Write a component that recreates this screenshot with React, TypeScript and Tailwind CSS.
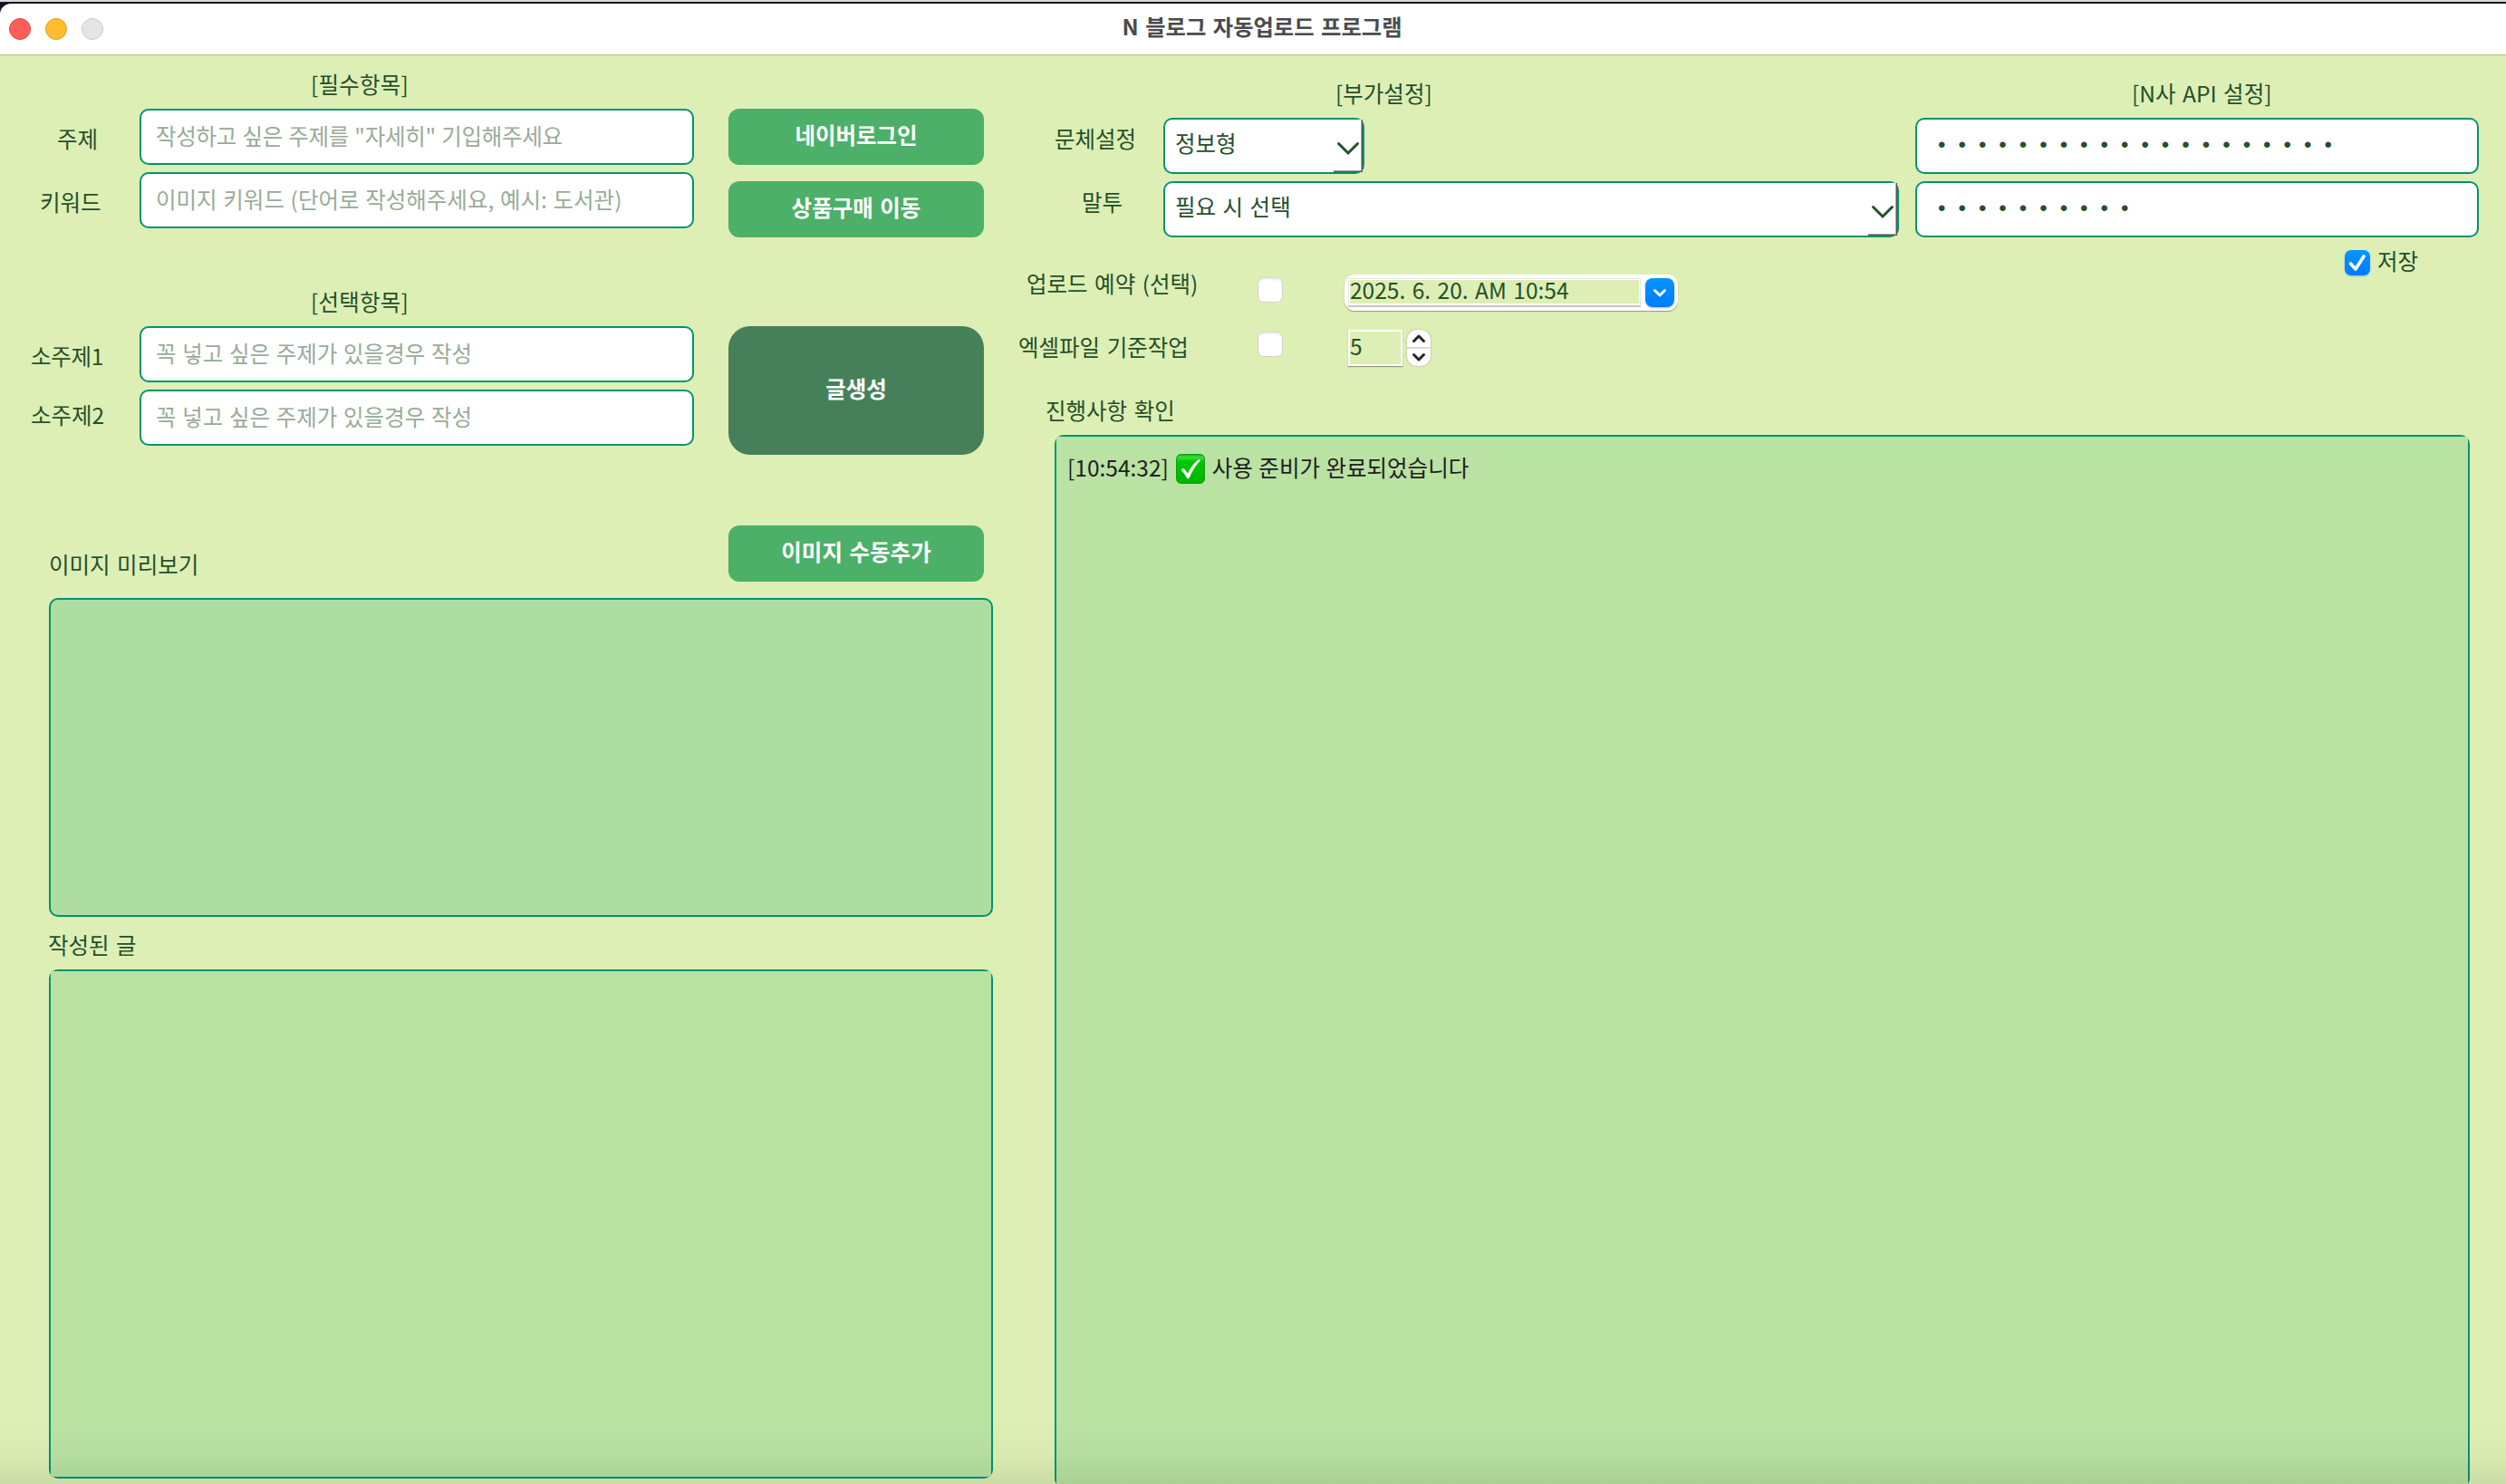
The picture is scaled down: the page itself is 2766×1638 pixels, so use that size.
import { useState } from "react";

const LABEL = "h-8 leading-8 whitespace-nowrap";
const FIELD =
  "h-[62px] w-full rounded-[10px] border-2 border-[#009370] bg-white text-[#264F2B] placeholder:text-[#98AC98] placeholder:opacity-100 outline-none";

function TextField({ placeholder, spacing = "[word-spacing:1.2px]" }: { placeholder: string; spacing?: string }) {
  return (
    <input
      className={`${FIELD} pb-[4px] pl-[16px] leading-8 ${spacing}`}
      placeholder={placeholder}
    />
  );
}

function SecretField({ value }: { value: string }) {
  return (
    <div
      className={`${FIELD} overflow-hidden pl-[23px] font-['Liberation_Sans'] text-[24px] leading-[56px] tracking-[14.04px] whitespace-nowrap`}
    >
      {value}
    </div>
  );
}

function SelectField({ value, width }: { value: string; width: string }) {
  return (
    <div
      className={`relative flex h-[62px] ${width} rounded-[10px] border-2 border-[#009370] bg-white pl-[11px]`}
    >
      <span className="mt-[10px] h-8 leading-8 whitespace-nowrap">{value}</span>
      {/* bevel of the drop button */}
      <span className="absolute top-0 right-0 h-[58px] w-8 border-r border-b border-[#565456] bg-white shadow-[inset_-1px_-1px_0_#a3a3a3]" />
      <svg
        className="absolute top-[24px] right-[3px]"
        width="26"
        height="16"
        viewBox="0 0 26 16"
        fill="none"
        stroke="#264F2B"
        strokeWidth="3"
        strokeLinecap="round"
      >
        <path d="M2.500 2.500L13 13L23.500 2.500" />
      </svg>
    </div>
  );
}

function GreenButton({ children }: { children: string }) {
  return (
    <button className="h-[62px] w-full rounded-[12px] bg-[#4CB068] pb-[5px] leading-8 font-bold text-white [word-spacing:2px]">
      {children}
    </button>
  );
}

function EmptyCheck({ className }: { className: string }) {
  return (
    <span
      className={`size-7 shrink-0 rounded-[7px] border border-[#d2d3cf] bg-white shadow-[inset_0_2px_2px_rgba(0,0,0,0.06)] ${className}`}
    />
  );
}

function BlueCheck() {
  return (
    <span className="mt-1 flex size-7 items-center justify-center rounded-[7px] bg-linear-to-b from-[#0A95FF] to-[#007AFF] shadow-[0_1px_2px_rgba(0,122,255,0.4)]">
      <svg width="28" height="28" viewBox="0 0 28 28" fill="none" stroke="#fff" strokeWidth="3.6" strokeLinecap="round" strokeLinejoin="round">
        <path d="M6.500 15L12 21L21 7" />
      </svg>
    </span>
  );
}

function DoneMark() {
  return (
    <svg width="32" height="33" viewBox="0 0 32 33" fill="none">
      <defs>
        <linearGradient id="done" x1="0" y1="0" x2="0" y2="1">
          <stop offset="0" stopColor="#12A512" />
          <stop offset="0.1" stopColor="#3BE03B" />
          <stop offset="0.25" stopColor="#00C800" />
          <stop offset="1" stopColor="#00B400" />
        </linearGradient>
      </defs>
      <rect x="0.5" y="0.5" width="31" height="32" rx="5" fill="url(#done)" stroke="#0C9F0C" />
      <path d="M5.500 17.500L8.500 15.800L13 21.500Q17.500 11.500 25 6L27 7.200Q19 15.500 14.500 27L12.500 27.500Q9.500 21.500 5.500 17.500Z" fill="#fff" />
    </svg>
  );
}

export default function App() {
  const [logs] = useState([
    { time: "[10:54:32]", message: "사용 준비가 완료되었습니다" },
  ]);

  return (
    <div className="relative flex h-[1638px] w-[2766px] flex-col overflow-hidden bg-[#DDEFB5] font-['Noto_Sans_CJK_KR',sans-serif] text-[24.5px] text-[#264F2B] [word-spacing:2px]">
      {/* Title bar */}
      <div className="h-[2px] shrink-0 bg-[#D9DADC]" />
      <div className="shrink-0 bg-[#10161f] pt-[2px]">
        <header className="grid h-14 grid-cols-[1fr_auto_1fr] items-center rounded-tl-[12px] bg-white">
          <div className="flex gap-4 pl-[10px]">
            <span className="size-6 rounded-full border border-[#E2463F] bg-[#FF5F57]" />
            <span className="size-6 rounded-full border border-[#E0A023] bg-[#FEBC2E]" />
            <span className="size-6 rounded-full border border-[#C9C9C9] bg-[#E5E5E5]" />
          </div>
          <h1 className="pb-[6px] pl-[20px] text-[24.3px] leading-8 font-bold text-[#4B4B4B]">
            N 블로그 자동업로드 프로그램
          </h1>
        </header>
      </div>
      <div className="h-[2px] shrink-0 border-t border-[#B5C892] bg-[#CFE0A8]" />

      <main className="flex">
        {/* Left side */}
        <section className="w-[1124px] shrink-0">
          <div className="flex">
            <div className="w-[766px]">
              <div className="flex">
                <div className="w-[154px] shrink-0 pt-[75px]">
                  <div className={`${LABEL} pl-[63px]`}>주제</div>
                  <div className={`${LABEL} mt-[38px] pl-[44px]`}>키워드</div>
                  <div className={`${LABEL} mt-[138px] pl-[34px] tracking-[-0.3px]`}>소주제1</div>
                  <div className={`${LABEL} mt-[33px] pl-[34px]`}>소주제2</div>
                </div>
                <div className="w-[612px] pt-[15px]">
                  <div className={`${LABEL} pl-[189px] tracking-[0.2px]`}>[필수항목]</div>
                  <div className="mt-[11px] flex flex-col gap-2">
                    <TextField
                      placeholder={'작성하고 싶은 주제를 "자세히" 기입해주세요'}
                      spacing="tracking-[-0.250px] [word-spacing:1px]"
                    />
                    <TextField placeholder="이미지 키워드 (단어로 작성해주세요, 예시: 도서관)" />
                  </div>
                  <div className={`${LABEL} mt-[65px] pl-[189px] tracking-[0.2px]`}>[선택항목]</div>
                  <div className="mt-[11px] flex flex-col gap-2">
                    <TextField placeholder="꼭 넣고 싶은 주제가 있을경우 작성" />
                    <TextField placeholder="꼭 넣고 싶은 주제가 있을경우 작성" />
                  </div>
                </div>
              </div>
              <div className={`${LABEL} mt-[115px] pl-[54px]`}>이미지 미리보기</div>
            </div>

            <div className="ml-[38px] w-[282px] pt-[58px]">
              <GreenButton>네이버로그인</GreenButton>
              <div className="h-[18px]" />
              <GreenButton>상품구매 이동</GreenButton>
              <button className="mt-[98px] mb-[78px] block h-[142px] w-full rounded-[24px] bg-[#46805B] pb-[5px] leading-8 font-bold text-white">
                글생성
              </button>
              <GreenButton>이미지 수동추가</GreenButton>
            </div>
          </div>

          <div className="mt-[18px] ml-[54px] h-[352px] w-[1042px] rounded-[10px] border-2 border-[#009370] bg-[#AEDDA1]" />
          <div className={`${LABEL} mt-[15px] pl-[53px]`}>작성된 글</div>
          <div className="mt-[11px] ml-[54px] h-[562px] w-[1042px] rounded-[10px] border-2 border-[#009370]">
            <div className="h-full bg-[#B9E2A3]" />
          </div>
        </section>

        {/* Right side */}
        <section className="w-[1642px]">
          <div className="flex gap-[18px]">
            <div className="w-[972px] pt-[25px]">
              <div className={`${LABEL} pl-[350px]`}>[부가설정]</div>
              <div className="mt-[11px] flex">
                <div className={`${LABEL} mt-[7px] w-[160px] pl-[40px]`}>문체설정</div>
                <SelectField value="정보형" width="w-[222px]" />
              </div>
              <div className="mt-2 flex">
                <div className={`${LABEL} mt-[7px] w-[160px] pl-[70px]`}>말투</div>
                <SelectField value="필요 시 선택" width="w-[812px]" />
              </div>

              <div className="mt-[35px] flex">
                <div className={`${LABEL} w-[264px] pl-[9px]`}>업로드 예약 (선택)</div>
                <EmptyCheck className="mt-[9px]" />
                <div className="mt-[6px] ml-[68px] flex h-10 w-[368px] rounded-[11px] bg-white pt-1 pl-1 shadow-[0_1px_1px_rgba(0,0,0,0.35)]">
                  <div className="h-[32px] w-[323px] border border-b-2 border-[#e6e6e6] border-b-[#c4c4c4] bg-white p-[1px]">
                    <div className="h-[26px] bg-[#DDEFB5] leading-[22px] whitespace-nowrap">
                      2025. 6. 20. AM 10:54
                    </div>
                  </div>
                  <span className="ml-[5px] flex size-8 items-center justify-center rounded-[8px] bg-linear-to-b from-[#0A95FF] to-[#007AFF] shadow-[0_1px_2px_rgba(0,122,255,0.4)]">
                    <svg width="16" height="11" viewBox="0 0 16 11" fill="none" stroke="#fff" strokeWidth="3" strokeLinecap="round" strokeLinejoin="round">
                      <path d="M2.500 2.500L8 8L13.500 2.500" />
                    </svg>
                  </span>
                </div>
              </div>

              <div className="mt-[21px] flex h-10">
                <div className={`${LABEL} mt-[3px] w-[264px]`}>엑셀파일 기준작업</div>
                <EmptyCheck className="mt-[2px]" />
                <div className="ml-[72px] h-10 w-[60px] border-2 border-white leading-[31px] shadow-[0_1px_1px_rgba(0,0,0,0.35)]">
                  5
                </div>
                <div className="ml-[5px] flex h-10 w-[26px] flex-col rounded-[11px] bg-white shadow-[0_0_2px_rgba(0,0,0,0.35)]">
                  <div className="flex h-5 items-center justify-center border-b border-[#d4d4d4]">
                    <svg width="16" height="11" viewBox="0 0 16 11" fill="none" stroke="#262626" strokeWidth="3" strokeLinecap="round" strokeLinejoin="round">
                      <path d="M2.500 8.500L8 3L13.500 8.500" />
                    </svg>
                  </div>
                  <div className="flex h-5 items-center justify-center border-t border-[#e2e2e2]">
                    <svg width="16" height="11" viewBox="0 0 16 11" fill="none" stroke="#262626" strokeWidth="3" strokeLinecap="round" strokeLinejoin="round">
                      <path d="M2.500 2.500L8 8L13.500 2.500" />
                    </svg>
                  </div>
                </div>
              </div>
            </div>

            <div className="w-[622px] pt-[25px]">
              <div className={`${LABEL} pl-[239px]`}>[N사 API 설정]</div>
              <div className="mt-[11px] flex flex-col gap-2">
                <SecretField value="••••••••••••••••••••" />
                <SecretField value="••••••••••" />
              </div>
              <div className="mt-[10px] ml-[474px] flex h-8 gap-[8px]">
                <BlueCheck />
                <span className={LABEL}>저장</span>
              </div>
            </div>
          </div>

          <div className={`${LABEL} mt-[33px] pl-[30px]`}>진행사항 확인</div>
          <div className="mt-[11px] ml-[40px] h-[1162px] w-[1562px] rounded-[10px] border-2 border-[#009370]">
            <div className="h-full bg-[#B9E2A3] pt-[18px] pl-[12px] text-[#202020]">
              {logs.map((log) => (
                <div key={log.time} className="flex h-8 gap-2 leading-8 [word-spacing:1px]">
                  <span>{log.time}</span>
                  <span className="mt-[1px]">
                    <DoneMark />
                  </span>
                  <span>{log.message}</span>
                </div>
              ))}
            </div>
          </div>
        </section>
      </main>

      {/* shade along the bottom edge */}
      <div className="pointer-events-none absolute inset-x-0 bottom-0 h-[70px] bg-linear-to-b from-transparent via-black/2 to-black/8" />
    </div>
  );
}
